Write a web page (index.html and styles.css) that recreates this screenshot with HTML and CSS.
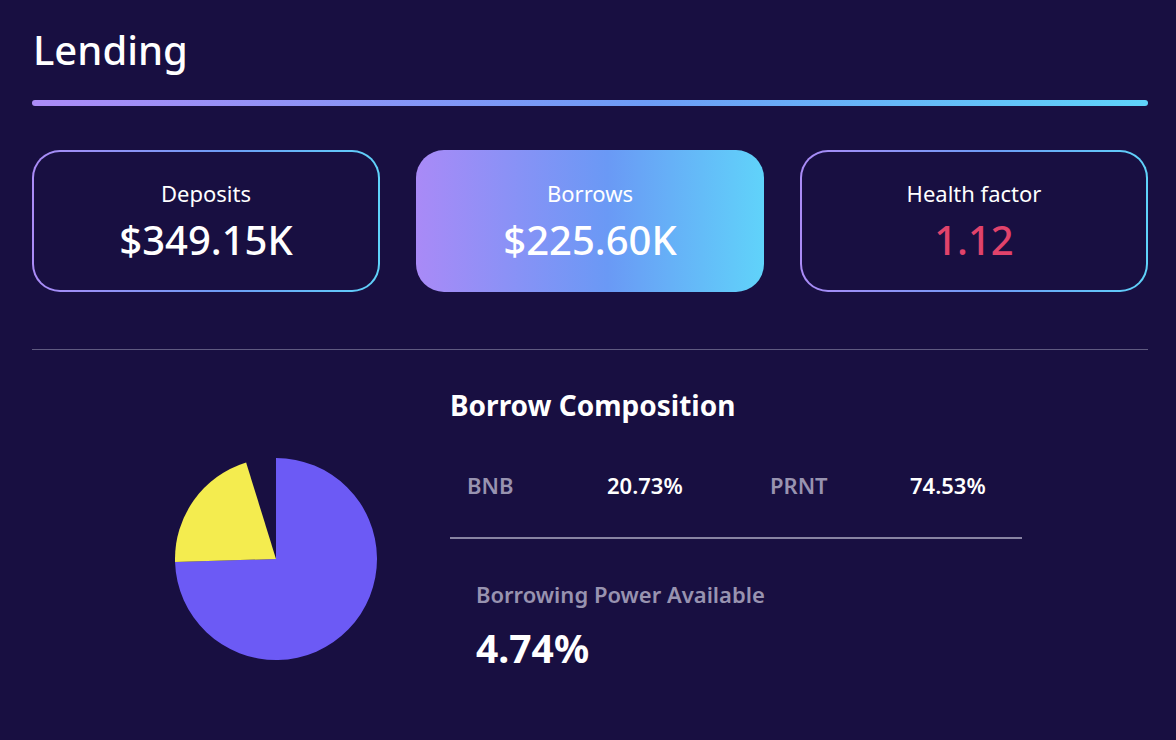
FILE: index.html
```html
<!DOCTYPE html>
<html>
<head>
<meta charset="utf-8">
<link rel="stylesheet" href="styles.css">
</head>
<body>
<main class="page">
  <h1 class="title">Lending</h1>
  <div class="title-bar"></div>

  <section class="cards">
    <div class="card card-outline">
      <div class="card-label">Deposits</div>
      <div class="card-value">$349.15K</div>
    </div>
    <div class="card card-filled">
      <div class="card-label">Borrows</div>
      <div class="card-value">$225.60K</div>
    </div>
    <div class="card card-outline">
      <div class="card-label">Health factor</div>
      <div class="card-value value-danger">1.12</div>
    </div>
  </section>

  <hr class="divider">

  <section class="composition">
    <div class="pie-wrap">
      <svg class="pie" width="204" height="204" viewBox="-102 -102 204 204">
        <path d="M0 0 L0 -101 A101 101 0 1 1 -100.955 3.0 Z" fill="#6c5af5"/>
        <path d="M0 0 L-100.955 3.0 A101 101 0 0 1 -29.87 -96.48 Z" fill="#f4ec4f"/>
      </svg>
    </div>
    <div class="details">
      <h2 class="details-title">Borrow Composition</h2>
      <div class="assets">
        <span class="asset-name">BNB</span>
        <span class="asset-pct">20.73%</span>
        <span class="asset-name">PRNT</span>
        <span class="asset-pct">74.53%</span>
      </div>
      <div class="details-line"></div>
      <div class="power">
        <div class="power-label">Borrowing Power Available</div>
        <div class="power-value">4.74%</div>
      </div>
    </div>
  </section>
</main>
</body>
</html>
```

FILE: styles.css
```css
html, body {
  margin: 0;
  padding: 0;
  background: #180f41;
}
body {
  font-family: "Noto Sans", "Open Sans", sans-serif;
  color: #ffffff;
  width: 1176px;
  height: 740px;
  overflow: hidden;
}
.page {
  padding: 22px 28px 0 32px;
}
.title {
  margin: 0 0 0 1px;
  font-size: 40px;
  font-weight: 500;
  line-height: 56px;
  letter-spacing: 0;
}
.title-bar {
  margin-top: 22px;
  height: 6px;
  border-radius: 3px;
  background: linear-gradient(90deg, #ab8bf7 0%, #6d9cf6 55%, #5fd3fa 100%);
}
.cards {
  display: grid;
  grid-template-columns: repeat(3, 348px);
  column-gap: 36px;
  margin-top: 44px;
}
.card {
  height: 142px;
  box-sizing: border-box;
  border-radius: 28px;
  display: flex;
  flex-direction: column;
  align-items: center;
  justify-content: center;
  padding-bottom: 0;
}
.card-outline {
  border: 2px solid transparent;
  background:
    linear-gradient(#180f41, #180f41) padding-box,
    linear-gradient(90deg, #ab8bf7 0%, #6d9cf6 55%, #5fd3fa 100%) border-box;
}
.card-filled {
  background: linear-gradient(90deg, #a98af7 0%, #6a99f5 55%, #60d3fa 100%);
}
.card-label {
  font-size: 22px;
  line-height: 30px;
  font-weight: 400;
}
.card-value {
  font-size: 40px;
  line-height: 48px;
  font-weight: 500;
  margin-top: 8px;
}
.value-danger {
  color: #e1436b;
}
.divider {
  margin: 57px 0 0 0;
  border: 0;
  height: 1px;
  background: #5f5a80;
}
.composition {
  display: flex;
  align-items: flex-start;
}
.pie-wrap {
  margin-left: 142px;
  margin-top: 107px;
  width: 204px;
  height: 204px;
}
.pie {
  display: block;
}
.details {
  margin-left: 72px;
  width: 572px;
  padding-top: 36px;
}
.details-title {
  margin: 0;
  font-size: 28px;
  line-height: 38px;
  font-weight: 700;
}
.assets {
  display: grid;
  grid-template-columns: 140px 163px 140px auto;
  padding-left: 17px;
  margin-top: 46px;
  font-size: 22px;
  line-height: 30px;
  font-weight: 600;
}
.asset-name {
  color: #9893b0;
}
.asset-pct {
  color: #ffffff;
}
.details-line {
  margin-top: 37px;
  height: 2px;
  background: #9c98b4;
  opacity: 0.85;
}
.power {
  padding-left: 26px;
  margin-top: 40px;
}
.power-label {
  font-size: 22px;
  line-height: 30px;
  font-weight: 600;
  color: #9893b0;
}
.power-value {
  margin-top: 15px;
  font-size: 39px;
  line-height: 48px;
  font-weight: 700;
}
```
